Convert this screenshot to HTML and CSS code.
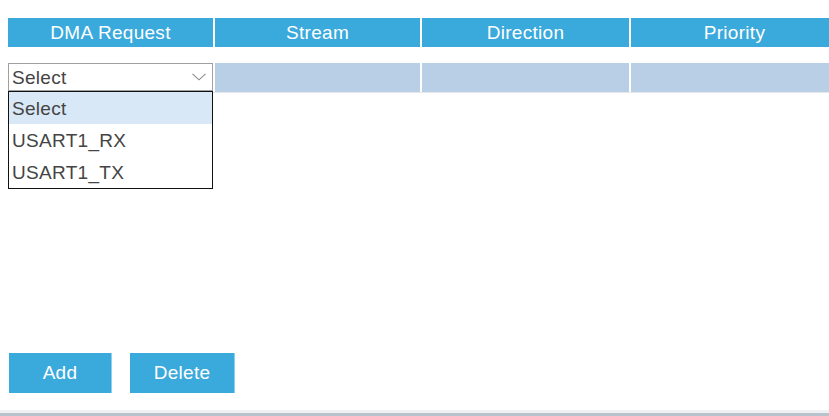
FILE: index.html
```html
<!DOCTYPE html>
<html>
<head>
<meta charset="utf-8">
<link rel="stylesheet" href="styles.css">
</head>
<body>
<div class="page">
  <div class="grid head">
    <div class="hcell">DMA Request</div>
    <div class="hcell">Stream</div>
    <div class="hcell">Direction</div>
    <div class="hcell">Priority</div>
  </div>
  <div class="grid row">
    <div class="cell sel-cell">
      <div class="select">
        <span class="sel-text">Select</span>
        <svg class="chev" width="14" height="8" viewBox="0 0 14 8"><path d="M0.5 0.8 L7 6.8 L13.5 0.8" fill="none" stroke="#8a8a8a" stroke-width="1.1"/></svg>
      </div>
      <ul class="options">
        <li class="opt active">Select</li>
        <li class="opt">USART1_RX</li>
        <li class="opt">USART1_TX</li>
      </ul>
    </div>
    <div class="cell"></div>
    <div class="cell"></div>
    <div class="cell"></div>
  </div>
  <div class="spacer"></div>
  <div class="buttons">
    <button class="btn btn-add">Add</button>
    <button class="btn btn-del">Delete</button>
  </div>
  <div class="bar"></div>
</div>
</body>
</html>
```

FILE: styles.css
```css
html, body {
  margin: 0;
  padding: 0;
  overflow: hidden;
  background: #fff;
}
.page {
  height: 416px;
  width: 829px;
  display: flex;
  flex-direction: column;
  padding-top: 18px;
  box-sizing: border-box;
  font-family: "Liberation Sans", Arial, sans-serif;
  font-size: 19px;
  letter-spacing: 0.3px;
  overflow: hidden;
}
.grid {
  display: grid;
  grid-template-columns: 205px 205px 207px 207px;
  column-gap: 2px;
  margin-left: 8px;
}
.head {
  height: 29px;
}
.hcell {
  background: #3aa9dc;
  color: #fff;
  display: flex;
  align-items: center;
  justify-content: center;
  padding-top: 1px;
  box-sizing: border-box;
}
.row {
  margin-top: 16px;
  height: 29px;
  border-bottom: 1px solid #e4e8ec;
  box-sizing: content-box;
  width: 830px;
}
.cell {
  background: #b9cfe5;
}
.sel-cell {
  position: relative;
  background: #fff;
}
.select {
  box-sizing: border-box;
  width: 205px;
  height: 28px;
  border: 1px solid #a0a0a0;
  display: flex;
  align-items: center;
  justify-content: space-between;
  padding: 0 6px 0 3px;
  color: #444;
  background: #fff;
}
.sel-text {
  padding-top: 2px;
}
.chev {
  margin-top: 0;
}
.options {
  position: absolute;
  left: 0;
  top: 28px;
  width: 205px;
  box-sizing: border-box;
  margin: 0;
  padding: 0;
  list-style: none;
  border: 1px solid #111;
  background: #fff;
  z-index: 2;
}
.opt {
  height: 32px;
  line-height: 33px;
  padding-left: 3px;
  color: #444;
}
.opt.active {
  background: #d9e8f6;
}
.spacer {
  flex: 1;
}
.buttons {
  display: flex;
  gap: 18px;
  margin-left: 9px;
  margin-bottom: 17px;
}
.btn {
  height: 40px;
  border: none;
  border-right: 1px solid #8fd0ee;
  background: #3aa9dc;
  color: #fff;
  font-family: "Liberation Sans", Arial, sans-serif;
  font-size: 19px;
  letter-spacing: 0.3px;
  padding: 0;
}
.btn-add { width: 103px; }
.btn-del { width: 105px; }
.bar {
  height: 3px;
  background: #eef0f2;
  border-bottom: 3px solid #b9c3cc;
}
```
